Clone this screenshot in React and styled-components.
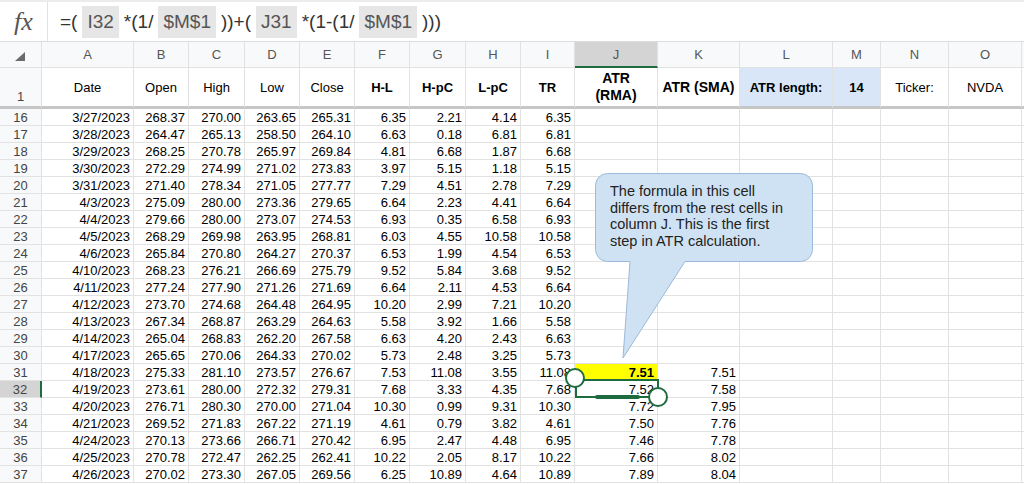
import React from 'react'
import styled, { createGlobalStyle } from 'styled-components'

const GlobalStyle = createGlobalStyle`
  html, body { margin: 0; padding: 0; background: #fff; }
  body { font-family: "Liberation Sans", Arial, sans-serif; overflow: hidden; }
`;

const GREEN = '#1f6b40';
const LINE = '#e2e2e2';

const Page = styled.div`
  position: relative;
  width: 1024px;
  height: 484px;
  overflow: hidden;
  background: #fff;
`;

const FormulaBar = styled.div`
  display: flex;
  height: 41px;
  box-sizing: border-box;
  border-top: 2px solid #ececec;
`;

const FxBox = styled.div`
  width: 48px;
  box-sizing: border-box;
  border-right: 1px solid ${LINE};
  display: flex;
  align-items: center;
  justify-content: center;
  font-family: "Liberation Serif", "DejaVu Serif", serif;
  font-style: italic;
  font-size: 26px;
  color: #555;
`;

const Formula = styled.div`
  display: flex;
  align-items: center;
  padding-left: 12px;
  font-size: 19px;
  color: #333;
  white-space: pre;
`;

const Ref = styled.span`
  display: inline-flex;
  align-items: center;
  height: 32px;
  padding: 0 5px;
  margin: 0 5px;
  background: #e6e6e6;
  color: #555;
`;

const Grid = styled.div`
  display: grid;
  grid-template-columns: 42px 92px 55px 56px 55px 55px 55px 56px 55px 54px 83px 82px 93px 48px 68px 73px 1fr;
  grid-template-rows: 26px 41px;
  grid-auto-rows: 17px;
  border-top: 1px solid #dcdcdc;
`;

const ColHead = styled.div`
  box-sizing: border-box;
  display: flex;
  align-items: center;
  justify-content: center;
  font-size: 13px;
  color: #555;
  background: ${p => (p.$active ? '#d4d4d4' : '#f8f9fa')};
  border-right: 1px solid ${LINE};
  border-bottom: ${p => (p.$active ? `2px solid ${GREEN}` : `1px solid ${LINE}`)};
`;

const RowHead = styled.div`
  box-sizing: border-box;
  display: flex;
  justify-content: center;
  align-items: ${p => (p.$bottom ? 'flex-end' : 'center')};
  padding-bottom: ${p => (p.$bottom ? '2px' : '0')};
  font-size: 13px;
  color: #444;
  background: ${p => (p.$active ? '#d4d4d4' : '#f8f9fa')};
  border-right: ${p => (p.$active ? `2px solid ${GREEN}` : `1px solid ${LINE}`)};
  border-bottom: ${p => (p.$frozen ? '3px solid #c6c6c6' : `1px solid ${LINE}`)};
`;

const Cell = styled.div`
  position: relative;
  box-sizing: border-box;
  display: flex;
  align-items: center;
  justify-content: ${p => (p.$center ? 'center' : 'flex-end')};
  text-align: center;
  padding: 0 3px;
  white-space: nowrap;
  font-size: ${p => p.$size || 13}px;
  line-height: ${p => (p.$size ? 17 : 15)}px;
  font-weight: ${p => (p.$bold ? 700 : 400)};
  color: #000;
  background: ${p => p.$bg || 'transparent'};
  border-right: 1px solid ${LINE};
  border-bottom: ${p => (p.$frozen ? '3px solid #c6c6c6' : `1px solid ${LINE}`)};
`;

const Corner = styled(ColHead)`
  padding: 4px 0 0 0;
`;

const SelBox = styled.div`
  position: absolute;
  left: 0;
  top: -2px;
  width: 84px;
  height: 19px;
  box-sizing: border-box;
  border: 2px solid ${GREEN};
  pointer-events: none;
`;

const DragBar = styled.div`
  position: absolute;
  left: 20px;
  top: 14px;
  width: 45px;
  height: 4px;
  border-radius: 2px;
  background: ${GREEN};
`;

const Handle = styled.div`
  position: absolute;
  left: ${p => p.$x - 10}px;
  top: ${p => p.$y - 10}px;
  width: 20px;
  height: 20px;
  box-sizing: border-box;
  border-radius: 50%;
  border: 2.5px solid ${GREEN};
  background: #fff;
  z-index: 2;
`;

const Callout = styled.div`
  position: absolute;
  left: 595px;
  top: 173px;
  width: 220px;
  height: 188px;
  z-index: 3;
`;

const CalloutShape = styled.svg`
  position: absolute;
  left: 0;
  top: 0;
`;

const CalloutText = styled.div`
  position: relative;
  padding: 10px 0 0 15px;
  font-size: 14.5px;
  line-height: 16.6px;
  color: #222;
`;

const letters = ['A', 'B', 'C', 'D', 'E', 'F', 'G', 'H', 'I', 'J', 'K', 'L', 'M', 'N', 'O', ''];

const rows = [
  [16, '3/27/2023', '268.37', '270.00', '263.65', '265.31', '6.35', '2.21', '4.14', '6.35', '', ''],
  [17, '3/28/2023', '264.47', '265.13', '258.50', '264.10', '6.63', '0.18', '6.81', '6.81', '', ''],
  [18, '3/29/2023', '268.25', '270.78', '265.97', '269.84', '4.81', '6.68', '1.87', '6.68', '', ''],
  [19, '3/30/2023', '272.29', '274.99', '271.02', '273.83', '3.97', '5.15', '1.18', '5.15', '', ''],
  [20, '3/31/2023', '271.40', '278.34', '271.05', '277.77', '7.29', '4.51', '2.78', '7.29', '', ''],
  [21, '4/3/2023', '275.09', '280.00', '273.36', '279.65', '6.64', '2.23', '4.41', '6.64', '', ''],
  [22, '4/4/2023', '279.66', '280.00', '273.07', '274.53', '6.93', '0.35', '6.58', '6.93', '', ''],
  [23, '4/5/2023', '268.29', '269.98', '263.95', '268.81', '6.03', '4.55', '10.58', '10.58', '', ''],
  [24, '4/6/2023', '265.84', '270.80', '264.27', '270.37', '6.53', '1.99', '4.54', '6.53', '', ''],
  [25, '4/10/2023', '268.23', '276.21', '266.69', '275.79', '9.52', '5.84', '3.68', '9.52', '', ''],
  [26, '4/11/2023', '277.24', '277.90', '271.26', '271.69', '6.64', '2.11', '4.53', '6.64', '', ''],
  [27, '4/12/2023', '273.70', '274.68', '264.48', '264.95', '10.20', '2.99', '7.21', '10.20', '', ''],
  [28, '4/13/2023', '267.34', '268.87', '263.29', '264.63', '5.58', '3.92', '1.66', '5.58', '', ''],
  [29, '4/14/2023', '265.04', '268.83', '262.20', '267.58', '6.63', '4.20', '2.43', '6.63', '', ''],
  [30, '4/17/2023', '265.65', '270.06', '264.33', '270.02', '5.73', '2.48', '3.25', '5.73', '', ''],
  [31, '4/18/2023', '275.33', '281.10', '273.57', '276.67', '7.53', '11.08', '3.55', '11.08', '7.51', '7.51'],
  [32, '4/19/2023', '273.61', '280.00', '272.32', '279.31', '7.68', '3.33', '4.35', '7.68', '7.52', '7.58'],
  [33, '4/20/2023', '276.71', '280.30', '270.00', '271.04', '10.30', '0.99', '9.31', '10.30', '7.72', '7.95'],
  [34, '4/21/2023', '269.52', '271.83', '267.22', '271.19', '4.61', '0.79', '3.82', '4.61', '7.50', '7.76'],
  [35, '4/24/2023', '270.13', '273.66', '266.71', '270.42', '6.95', '2.47', '4.48', '6.95', '7.46', '7.78'],
  [36, '4/25/2023', '270.78', '272.47', '262.25', '262.41', '10.22', '2.05', '8.17', '10.22', '7.66', '8.02'],
  [37, '4/26/2023', '270.02', '273.30', '267.05', '269.56', '6.25', '10.89', '4.64', '10.89', '7.89', '8.04'],
];

const headers = [
  { text: 'Date' },
  { text: 'Open' },
  { text: 'High' },
  { text: 'Low' },
  { text: 'Close' },
  { text: 'H-L', bold: true },
  { text: 'H-pC', bold: true },
  { text: 'L-pC', bold: true },
  { text: 'TR', bold: true },
  { text: <>ATR<br />(RMA)</>, bold: true, size: 14 },
  { text: 'ATR (SMA)', bold: true, size: 14 },
  { text: 'ATR length:', bold: true, bg: '#d9e6f7' },
  { text: '14', bold: true, bg: '#d9e6f7' },
  { text: 'Ticker:' },
  { text: 'NVDA' },
  { text: '' },
];

function Selection() {
  return (
    <>
      <SelBox />
      <DragBar />
      <Handle $x={0} $y={-3} />
      <Handle $x={83} $y={16} />
    </>
  );
}

export default function App() {
  return (
    <Page>
      <GlobalStyle />
      <FormulaBar>
        <FxBox>fx</FxBox>
        <Formula>
          =(<Ref>I32</Ref>*(1/<Ref>$M$1</Ref>))+(<Ref>J31</Ref>*(1-(1/<Ref>$M$1</Ref>)))
        </Formula>
      </FormulaBar>

      <Grid>
        <Corner>
          <svg width="11" height="10" viewBox="0 0 11 10">
            <path d="M10 0 L10 9 L0 9 Z" fill="#6b6b6b" />
          </svg>
        </Corner>
        {letters.map((l, i) => (
          <ColHead key={i} $active={l === 'J'}>{l}</ColHead>
        ))}

        <RowHead $bottom $frozen>1</RowHead>
        {headers.map((h, i) => (
          <Cell key={i} $center $frozen $bold={h.bold} $bg={h.bg} $size={h.size}>
            {h.text}
          </Cell>
        ))}

        {rows.map(r => {
          const [num, ...vals] = r;
          return (
            <React.Fragment key={num}>
              <RowHead $active={num === 32}>{num}</RowHead>
              {vals.map((v, i) => (
                <Cell
                  key={i}
                  $bold={num === 31 && i === 9}
                  $bg={num === 31 && i === 9 ? '#ffff00' : undefined}
                >
                  {v}
                  {num === 32 && i === 9 && <Selection />}
                </Cell>
              ))}
              {[0, 1, 2, 3, 4].map(k => (
                <Cell key={'e' + k} />
              ))}
            </React.Fragment>
          );
        })}
      </Grid>

      <Callout>
        <CalloutShape width="220" height="188" viewBox="0 0 220 188">
          <path
            d="M12.5 0.5 H205.5 A12 12 0 0 1 217.5 12.5 V76.5 A12 12 0 0 1 205.5 88.5 H90 L28 185 L35 88.5 H12.5 A12 12 0 0 1 0.5 76.5 V12.5 A12 12 0 0 1 12.5 0.5 Z"
            fill="#cfe2f3"
            stroke="#9db9d9"
            strokeWidth="1"
          />
        </CalloutShape>
        <CalloutText>
          The formula in this cell<br />
          differs from the rest cells in<br />
          column J. This is the first<br />
          step in ATR calculation.
        </CalloutText>
      </Callout>
    </Page>
  );
}
